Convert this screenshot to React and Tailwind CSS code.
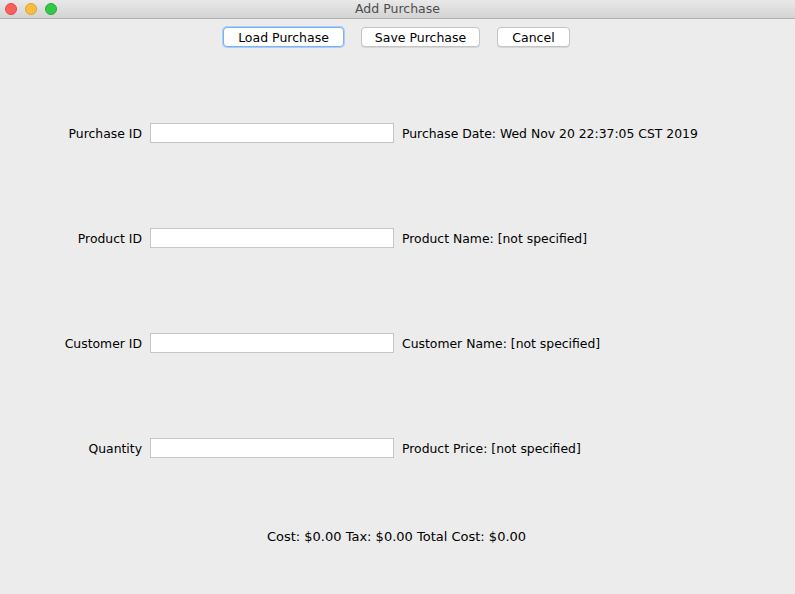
import React from 'react';

const rows = [
    { label: 'Purchase ID', info: 'Purchase Date: Wed Nov 20 22:37:05 CST 2019' },
    { label: 'Product ID', info: 'Product Name: [not specified]' },
    { label: 'Customer ID', info: 'Customer Name: [not specified]' },
    { label: 'Quantity', info: 'Product Price: [not specified]' },
];

const Button = ({ children, focused, width }) => (
    <button
        className={`h-[20px] ${width} pt-[2px] rounded-[4px] bg-white text-[12.5px] leading-none text-black border ${
            focused ? 'border-[#7eb1ee] shadow-[0_0_0_1px_#a9cdf6]' : 'border-[#c4c4c4] shadow-[0_1px_0_#d6d6d6]'
        }`}
    >
        {children}
    </button>
);

export default function App() {
    return (
        <div className="w-[795px] h-[594px] bg-[#ececec] flex flex-col text-black" style={{ fontFamily: '"DejaVu Sans", "Noto Sans", sans-serif' }}>
            {/* Title bar */}
            <div className="h-[19px] bg-gradient-to-b from-[#e9e9e9] to-[#d3d3d3] border-b border-[#b1b1b1] flex items-center relative">
                <div className="flex gap-[8px] pl-[5px]">
                    <span className="w-[12px] h-[12px] rounded-full bg-[#fc605b] border border-[#de4b46]" />
                    <span className="w-[12px] h-[12px] rounded-full bg-[#fdbc40] border border-[#dea236]" />
                    <span className="w-[12px] h-[12px] rounded-full bg-[#34c84a] border border-[#27aa35]" />
                </div>
                <div className="absolute inset-0 flex items-center justify-center text-[12.5px] text-[#4d4d4d]">Add Purchase</div>
            </div>

            {/* Toolbar */}
            <div className="flex justify-center gap-[17px] pt-[8px] pr-[2px]">
                <Button focused width="w-[121px]">Load Purchase</Button>
                <Button width="w-[119px]">Save Purchase</Button>
                <Button width="w-[73px]">Cancel</Button>
            </div>

            {/* Form rows */}
            <div className="flex flex-col pt-[76px] gap-[85px]">
                {rows.map((row) => (
                    <div key={row.label} className="flex items-center h-[20px]">
                        <div className="w-[142px] pt-[2px] text-right text-[12.4px]">{row.label}</div>
                        <div className="w-[244px] h-[20px] ml-[8px] bg-white border border-[#c6c6c6]" />
                        <div className="ml-[8px] pt-[2px] text-[12.4px]">{row.info}</div>
                    </div>
                ))}
            </div>

            <div className="mt-[69px] text-center text-[13px] pr-[2px]">Cost: $0.00 Tax: $0.00 Total Cost: $0.00</div>
        </div>
    );
}
